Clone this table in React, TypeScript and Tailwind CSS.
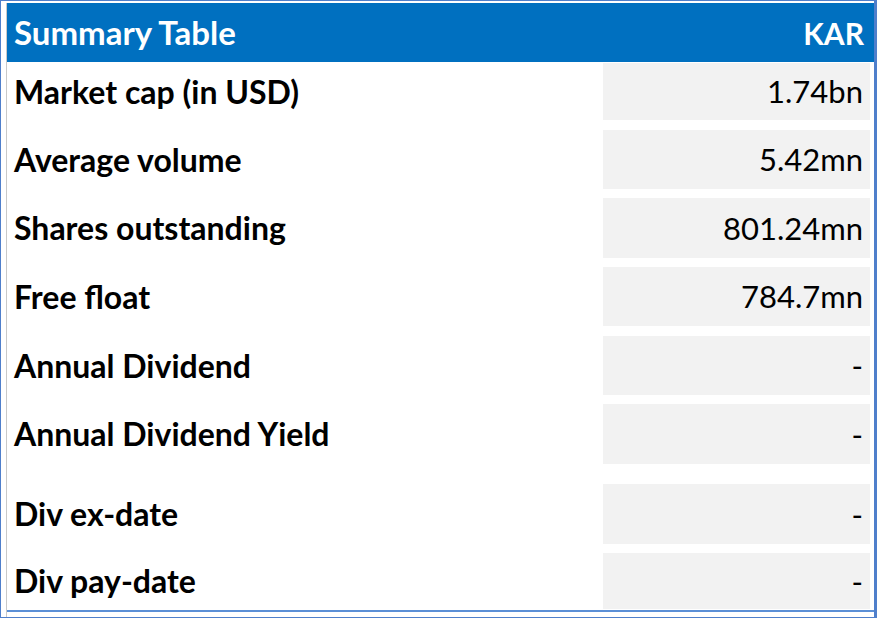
const rows = [
  { label: 'Market cap (in USD)', value: '1.74bn', cls: 'mt-px h-[57px]' },
  { label: 'Average volume', value: '5.42mn', cls: 'mt-[10px] h-[59px]' },
  { label: 'Shares outstanding', value: '801.24mn', cls: 'mt-[9px] h-[60px]' },
  { label: 'Free float', value: '784.7mn', cls: 'mt-[9px] h-[59px]' },
  { label: 'Annual Dividend', value: '-', cls: 'mt-[10px] h-[59px]' },
  { label: 'Annual Dividend Yield', value: '-', cls: 'mt-[9px] h-[60px]' },
  { label: 'Div ex-date', value: '-', cls: 'mt-[20px] h-[60px]' },
  { label: 'Div pay-date', value: '-', cls: 'mt-[9px] h-[56px]' },
]

export default function App() {
  return (
    <div className="h-[618px] w-[877px] overflow-hidden border-b border-l border-r-[3px] border-t border-[#4f7fcb] bg-white pl-[5px] pt-[2px] font-['Lato','Liberation_Sans',sans-serif] text-black">
      <div className="flex h-[614px] w-[868px] flex-col border-l border-[#c9c9c9]">
        <div className="flex h-[59px] items-center justify-between bg-[#0070c0] pl-[7px] pr-[10px] font-bold leading-none text-white">
          <span className="text-[33px]">Summary Table</span>
          <span className="text-[30px]">KAR</span>
        </div>
        {rows.map((r) => (
          <div key={r.label} className={`flex leading-none ${r.cls}`}>
            <div className="flex flex-1 items-center pl-[7px] text-[32px] font-bold">{r.label}</div>
            <div className="mr-[4px] flex w-[267px] items-center justify-end bg-[#f2f2f2] pr-[7px] text-[31px]">
              {r.value}
            </div>
          </div>
        ))}
        <div className="mt-px h-[2px] bg-[#5b8fd6]" />
      </div>
    </div>
  )
}
